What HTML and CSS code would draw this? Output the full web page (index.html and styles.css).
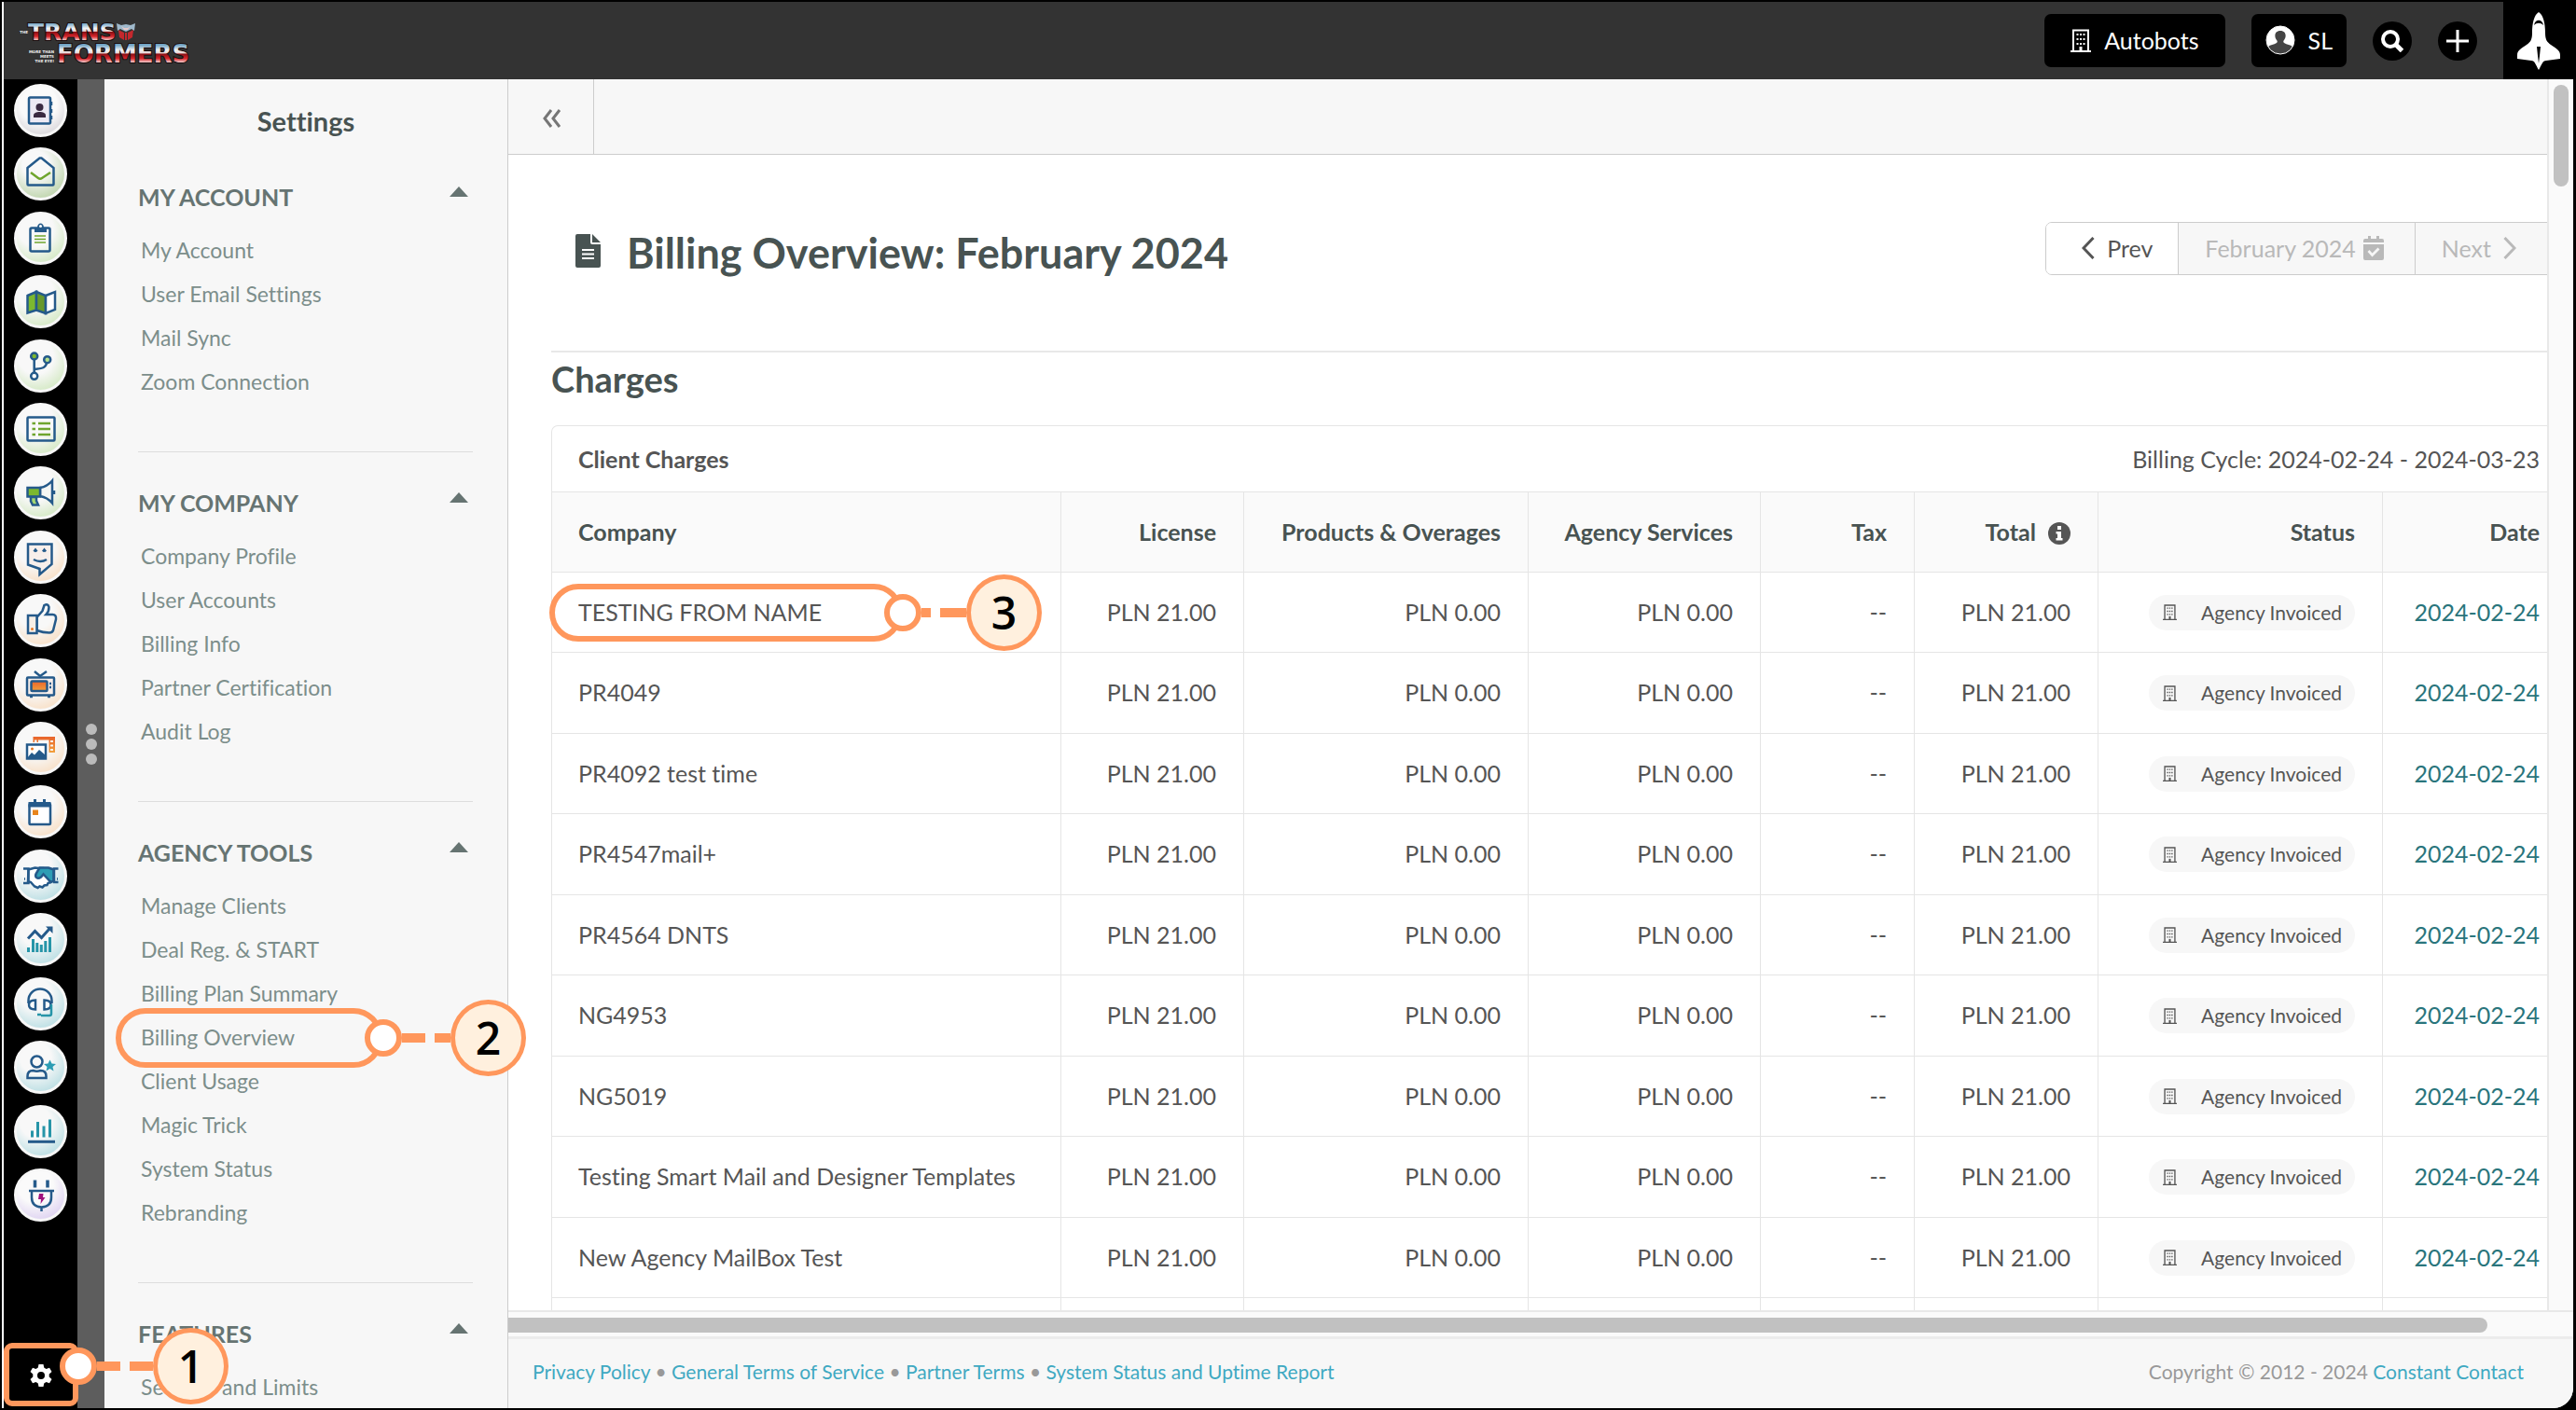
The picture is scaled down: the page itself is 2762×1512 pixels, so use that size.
FILE: index.html
```html
<!DOCTYPE html>
<html lang="en">

<head>
    <meta charset="UTF-8">
    <meta name="viewport" content="width=device-width, initial-scale=1.0">
    <title>Billing Overview</title>
    <link rel="stylesheet" href="styles.css">
</head>

<body>
    <!-- Shared shapes -->
    <svg class="defs" aria-hidden="true">
        <defs>
            <linearGradient id="chrome" x1="0" y1="0" x2="0" y2="1">
                <stop offset="0.17" stop-color="#6fa3c4" />
                <stop offset="0.36" stop-color="#f2f4f6" />
                <stop offset="0.46" stop-color="#e9d5d5" />
                <stop offset="0.5" stop-color="#8d0f14" />
                <stop offset="0.66" stop-color="#d8262c" />
                <stop offset="0.8" stop-color="#f3d3d3" />
            </linearGradient>
            <linearGradient id="flame" x1="0" y1="0" x2="0" y2="1">
                <stop offset="0" stop-color="#e8642c" />
                <stop offset="1" stop-color="#f2a03c" />
            </linearGradient>
            <symbol id="building" viewBox="0 0 22 25">
                <path fill="none" stroke="currentColor" stroke-width="2" d="M3 24V1.5h16V24M0 24h22" />
                <path fill="none" stroke="currentColor" stroke-width="2" stroke-dasharray="2 3" d="M7.5 5v14M11 5v14M14.5 5v14" />
                <path fill="currentColor" d="M9.5 19h3v5h-3z" />
            </symbol>
        </defs>
    </svg>

    <header class="topbar">
        <a class="logo" href="#" aria-label="The Transformers">
            <svg width="190" height="54" viewBox="0 0 190 54">
                <g class="logo-small">
                    <text x="8" y="19" text-anchor="end">THE</text>
                    <text x="36" y="40" text-anchor="end">MORE THAN</text>
                    <text x="36" y="45" text-anchor="end">MEETS</text>
                    <text x="36" y="50" text-anchor="end">THE EYE!</text>
                </g>
                <g class="logo-big">
                    <text class="logo-top" x="8" y="26">TRANS</text>
                    <text x="39" y="50">FORMERS</text>
                </g>
                <path fill="#9fb9cc" d="M103 8l5 2 5-1 5 1 5-2-1 8-3-2-6 3-6-3-3 2z" />
                <path fill="#c4282d" d="M105 15l6 3v8l-5-3zM121 15l-6 3v8l5-3zM112 18h2v8h-2z" />
                <path fill="#e6c9c9" d="M108 11l3 2h4l3-2-3 4h-4z" />
            </svg>
        </a>
        <nav class="topbar-actions">
            <button class="top-btn agency-btn" type="button">
                <svg width="22" height="25"><use href="#building" /></svg>Autobots
            </button>
            <button class="top-btn user-btn" type="button">
                <svg width="32" height="32" viewBox="0 0 32 32">
                    <circle cx="16" cy="16" r="15" fill="#444" stroke="#fff" stroke-width="1" />
                    <path fill="#fff" d="M16 1a15 15 0 0 0-13 22c2-2 6-2 9-4 1-1 1-2 0-3-3-4-2-10 4-10s7 6 4 10c-1 1-1 2 0 3 3 2 7 2 9 4A15 15 0 0 0 16 1z" />
                </svg>SL
            </button>
            <button class="round-btn" type="button" aria-label="Search">
                <svg width="24" height="24" viewBox="0 0 24 24" fill="none" stroke="#fff">
                    <circle cx="10" cy="10" r="8" stroke-width="4" />
                    <path d="M15.500 15.500l7 7" stroke-width="5" />
                </svg>
            </button>
            <button class="round-btn" type="button" aria-label="Add">
                <svg width="24" height="24" viewBox="0 0 24 24" stroke="#fff" stroke-width="3">
                    <path d="M12 0v24M0 12h24" />
                </svg>
            </button>
            <a class="shuttle" href="#" aria-label="Launch">
                <svg width="46" height="62" viewBox="0 0 46 62">
                    <path fill="#fff" d="M23 0c5 3 7 12 7 22 0 8 2 10 6 13 6 4 10 6 10 11v4l-15 2c-4 0-5 5-8 10-3-5-4-10-8-10L0 50v-4c0-5 4-7 10-11 4-3 6-5 6-13 0-10 2-19 7-22z" />
                    <path fill="#000" d="M18 14c1-7 9-7 10 0-3-3-7-3-10 0zM21 37h4l-1 10-1 8-1-8z" />
                </svg>
            </a>
        </nav>
    </header>

    <div class="shell">
        <nav class="rail">
            <ul class="rail-list">
                <li><a class="rail-icon gray" href="#" aria-label="Contacts"><svg viewBox="0 0 57 57"><rect x="16" y="14.500" width="23" height="28" rx="1.500" fill="#ece9f3" /><path d="M40 19v4M40 27v4M40 34v4" /><g class="plum"><circle cx="27.500" cy="25" r="4" /><path d="M21 36v-2c0-3 3-4 6.500-4s6.500 1 6.500 4v2z" /></g></svg></a></li>
                <li><a class="rail-icon green deep" href="#" aria-label="Email"><svg viewBox="0 0 57 57"><path d="M14.500 22l13-10.500h2l13 10.500v17.500q0 1-1 1h-26q-1 0-1-1z" /><path class="lime" d="M18 27l8 6q2 1.500 4 0l9-6" /></svg></a></li>
                <li><a class="rail-icon green" href="#" aria-label="Forms"><svg viewBox="0 0 57 57"><rect x="17.500" y="17.500" width="21" height="25" rx="1.500" /><path class="navy" d="M22 17h3c0-6 7-6 7 0h3v5H22z" /><circle cx="28.500" cy="15.500" r="1.500" fill="#fff" stroke="none" /><path class="lime thin" d="M22 26h12M22 29.500h12M22 33h12" /></svg></a></li>
                <li><a class="rail-icon green" href="#" aria-label="Maps"><svg viewBox="0 0 57 57"><path fill="#7cb82f" d="M14.500 22l9.500-4v19.500l-9.500 3z" /><path fill="#68992c" d="M24 18l10 4v19l-10-3.500z" /><path fill="#fff" d="M34 22l10-4v19l-10 4z" /></svg></a></li>
                <li><a class="rail-icon green" href="#" aria-label="Automations"><svg viewBox="0 0 57 57"><path d="M21.700 21v15M21.700 32c8-1 13-1 13.500-8" /><circle cx="21.700" cy="18" r="3.500" fill="#7cb82f" /><circle cx="35.700" cy="21.700" r="3.500" fill="#b5e08c" /><circle cx="21.700" cy="39.300" r="3.500" fill="#fff" /></svg></a></li>
                <li><a class="rail-icon green" href="#" aria-label="Lists"><svg viewBox="0 0 57 57"><rect x="14.500" y="15.500" width="29" height="25" rx="1" /><path class="lime" d="M26 22h13M26 28h13M26 34h13M19.500 22h3.500M19.500 28h3.500M19.500 34h3.500" stroke-width="2.500" /></svg></a></li>
                <li><a class="rail-icon green" href="#" aria-label="Campaigns"><svg viewBox="0 0 57 57"><path d="M28 23c6-1 10-4 13-7.500v24c-3-3.500-7-6.500-13-7.500z" fill="#f4f6f4" /><path fill="#7cb82f" d="M14.500 23H28v9.500H14.500z" /><path fill="#a4d873" d="M18 33h6v4l2 4.500h-6l-2-4z" /><path d="M43 26v4" /></svg></a></li>
                <li><a class="rail-icon orange" href="#" aria-label="Feedback"><svg viewBox="0 0 57 57"><path d="M15 14.500h25.500V36L27.500 47v-6L15 36.500z" fill="#f8efeb" /><path d="M21 31q7.500 4 14 0M21.500 22.500l1.500-2 1.500 2M31 22.500l1.500-2 1.500 2" /></svg></a></li>
                <li><a class="rail-icon orange" href="#" aria-label="Social"><svg viewBox="0 0 57 57"><path d="M24.500 25l6-7 2-6q4-2 5 2 0 5-3 8h7q4 0 3.500 5l-3 12q-1 2.500-4 2.500-7 0-13.500-2.500z" /><path d="M15 23h9.500v19H15z" fill="#f8efe6" /><circle cx="19.500" cy="37.500" r="1.500" fill="#e87722" stroke="none" /></svg></a></li>
                <li><a class="rail-icon orange" href="#" aria-label="Media"><svg viewBox="0 0 57 57"><path d="M22 14l6 5 7-5" /><rect x="14" y="20.500" width="29" height="19" rx="1" fill="#f8efeb" /><rect x="18.500" y="24.500" width="17" height="10.500" rx="1" fill="url(#flame)" /><path d="M38 27h2M38 31h2M17 41h3M36 41h3" /></svg></a></li>
                <li><a class="rail-icon orange" href="#" aria-label="Content"><svg viewBox="0 0 57 57"><path fill="url(#flame)" stroke="none" fill-rule="evenodd" d="M20.500 16H44v17h-6.500V19.500H26V22h-1.500v-2.500h-2.500V22h-1.500zM39 20h3v2h-3zM39 24.500h3v2h-3zM39 29h3v2h-3z" /><rect x="14" y="24.500" width="20" height="15" fill="#fff" /><path class="navy" d="M14 39l5-6 3 2.500 5-5.500 7 6v3z" /><circle cx="19.500" cy="29" r="1.500" fill="#e87722" stroke="none" /></svg></a></li>
                <li><a class="rail-icon orange" href="#" aria-label="Calendar"><svg viewBox="0 0 57 57"><rect x="16.500" y="20" width="22.500" height="22" rx="1" fill="#fff" /><path class="navy" d="M15.500 18h24v5.500h-24zM21 15h3v4h-3zM31 15h3v4h-3z" /><path fill="#e8851c" stroke="none" d="M20 26.500h6V32h-6z" /></svg></a></li>
                <li><a class="rail-icon teal" href="#" aria-label="Deals"><svg viewBox="0 0 57 57"><path fill="#fff" d="M15.500 21.500l7-2 4 .5h5l9 12-1 3-3 1-1 2-3 .5-2 2-3-1-2 1.500-3.500-1.500-4-4.500-3-1z" /><path fill="#2d9db4" d="M27.500 19.500H37l5.500 2v12l-3 1.500-8-8.500-2.500 3q-3.500 2.500-5.500 0-1-2 1-5z" /><path d="M10 20.500h5.500V36H10M47.500 20.500H43V35h4.500M11 31.500h1M46 31.500h1" /></svg></a></li>
                <li><a class="rail-icon teal" href="#" aria-label="Reports"><svg viewBox="0 0 57 57"><path class="aqua" stroke-width="3" d="M15.500 42v-5M20.500 42V28M24.800 42V32M29.300 42v-8M33.800 42V30M38.500 42V26" /><path d="M15 27.500l7.500-8 7 7L38 17" stroke-width="3" /><path class="navy" d="M34 14.500h7.500V22z" /></svg></a></li>
                <li><a class="rail-icon teal" href="#" aria-label="Support"><svg viewBox="0 0 57 57"><path d="M15.500 28v-3a12.500 12.500 0 0 1 25 0v3" /><path d="M23 24.500v10c-4 0-7-1-7-5s3-5 7-5zM32.500 24.500v10c4 0 7-1 7-5s-3-5-7-5z" fill="#fff" /><path class="aqua" d="M40 29v10q0 2-2 2h-9M25 40h4" stroke-width="2.500" /></svg></a></li>
                <li><a class="rail-icon teal" href="#" aria-label="Leads"><svg viewBox="0 0 57 57"><circle cx="24.500" cy="22.500" r="6" /><path d="M14.500 40v-2q0-6 6-6 4 1.500 8 0 6 0 6 6v2z" /><path fill="#2d9db4" stroke="none" d="M38.500 20.500l2 4 4.500.5-3.500 3 1 4.500-4-2.500-4 2.500 1-4.500-3.500-3 4.500-.5z" /></svg></a></li>
                <li><a class="rail-icon teal" href="#" aria-label="Analytics"><svg viewBox="0 0 57 57"><path class="aqua" stroke-width="3" d="M19.500 34.500v-7M25.500 34.500V18M32 34.500v-12M38.500 34.500v-19" /><path d="M15 39.300h29" stroke-width="3" /></svg></a></li>
                <li><a class="rail-icon purple" href="#" aria-label="Integrations"><svg viewBox="0 0 57 57"><path d="M22.500 12.500v8M36 12.500v8" stroke-width="3.500" /><path d="M16 24h27M19 25v6q0 10 10.500 10.500Q40 41 40 31v-6M29.500 42v4" /><path fill="#a0127d" stroke="none" d="M27 27h4.500l-.5 4h2.500l-5 7 .5-5h-3z" /></svg></a></li>
            </ul>
            <a class="rail-settings" href="#" aria-label="Settings">
                <svg width="24" height="24" viewBox="0 0 24 24">
                    <path fill="#fff" fill-rule="evenodd" d="M9.500 0h5l.7 3.600 2.300 1.300 3.500-1.200 2.500 4.300-2.800 2.400v3.200l2.800 2.400-2.500 4.300-3.500-1.200-2.300 1.300-.7 3.600h-5l-.7-3.600-2.300-1.300L3 20.300.5 16l2.800-2.400v-3.200L.5 8 3 3.700l3.500 1.200 2.300-1.300zM12 8a4 4 0 1 0 0 8 4 4 0 0 0 0-8z" />
                </svg>
                <span class="callout callout-one">
                    <span class="callout-tail"><i class="knob"></i><i class="dash"></i><i class="dash"></i><b>1</b></span>
                </span>
            </a>
        </nav>
        <div class="grip"><i></i><i></i><i></i></div>

        <aside class="sidebar">
            <h2 class="sidebar-title">Settings</h2>
            <section class="side-group">
                <h3>My Account <i class="caret"></i></h3>
                <ul>
                    <li><a href="#">My Account</a></li>
                    <li><a href="#">User Email Settings</a></li>
                    <li><a href="#">Mail Sync</a></li>
                    <li><a href="#">Zoom Connection</a></li>
                </ul>
            </section>
            <section class="side-group">
                <h3>My Company <i class="caret"></i></h3>
                <ul>
                    <li><a href="#">Company Profile</a></li>
                    <li><a href="#">User Accounts</a></li>
                    <li><a href="#">Billing Info</a></li>
                    <li><a href="#">Partner Certification</a></li>
                    <li><a href="#">Audit Log</a></li>
                </ul>
            </section>
            <section class="side-group">
                <h3>Agency Tools <i class="caret"></i></h3>
                <ul>
                    <li><a href="#">Manage Clients</a></li>
                    <li><a href="#">Deal Reg. &amp; START</a></li>
                    <li><a href="#">Billing Plan Summary</a></li>
                    <li>
                        <a href="#">Billing Overview</a>
                        <span class="callout callout-two">
                            <span class="callout-tail"><i class="knob"></i><i class="dash"></i><i class="dash"></i><b>2</b></span>
                        </span>
                    </li>
                    <li><a href="#">Client Usage</a></li>
                    <li><a href="#">Magic Trick</a></li>
                    <li><a href="#">System Status</a></li>
                    <li><a href="#">Rebranding</a></li>
                </ul>
            </section>
            <section class="side-group">
                <h3>Features <i class="caret"></i></h3>
                <ul>
                    <li><a href="#">Settings and Limits</a></li>
                </ul>
            </section>
        </aside>

        <main class="main">
            <div class="viewport">
                <div class="content">
                    <div class="toolbar">
                        <button class="collapse-btn" type="button" aria-label="Collapse menu">
                            <svg width="22" height="20" viewBox="0 0 22 20" fill="none" stroke="#767676" stroke-width="3">
                                <path d="M10 1L3 10l7 9M19 1l-7 9 7 9" />
                            </svg>
                        </button>
                    </div>
                    <div class="page">
                        <div class="page-head">
                            <svg width="27" height="36" viewBox="0 0 27 36">
                                <path fill="#485352" fill-rule="evenodd" d="M2 0h14v9q0 2 2 2h9v23q0 2-2 2H2q-2 0-2-2V2q0-2 2-2zM18 0l9 9h-9zM7 16h13v2H7zM7 20.500h13v2H7zM7 25h13v2H7z" />
                            </svg>
                            <h1>Billing Overview: February 2024</h1>
                            <div class="month-nav">
                                <button type="button">
                                    <svg width="14" height="24" viewBox="0 0 14 24" fill="none" stroke="currentColor" stroke-width="3"><path d="M12.500 1L2 12l10.500 11" /></svg>Prev
                                </button>
                                <button type="button" disabled>February 2024
                                    <svg width="22" height="26" viewBox="0 0 22 26">
                                        <path fill="currentColor" fill-rule="evenodd" d="M5 0h3v3h6V0h3v3h3q2 0 2 2v2H0V5q0-2 2-2h3zM0 9h22v15q0 2-2 2H2q-2 0-2-2zM4.500 17l5 5.500 8-8-2-2-6 6-3-3.500z" />
                                    </svg>
                                </button>
                                <button type="button" disabled>Next
                                    <svg width="14" height="24" viewBox="0 0 14 24" fill="none" stroke="currentColor" stroke-width="3"><path d="M1.500 1L12 12 1.500 23" /></svg>
                                </button>
                            </div>
                        </div>
                        <h2 class="section-title">Charges</h2>
                        <div class="panel-head">
                            <strong>Client Charges</strong>
                            <span>Billing Cycle: 2024-02-24 - 2024-03-23</span>
                        </div>
                        <table class="charges">
                            <colgroup>
                                <col>
                                <col class="col-license">
                                <col class="col-products">
                                <col class="col-services">
                                <col class="col-tax">
                                <col class="col-total">
                                <col class="col-status">
                                <col class="col-date">
                            </colgroup>
                            <thead>
                                <tr>
                                    <th>Company</th>
                                    <th>License</th>
                                    <th>Products &amp; Overages</th>
                                    <th>Agency Services</th>
                                    <th>Tax</th>
                                    <th>Total
                                        <svg class="info" width="24" height="24" viewBox="0 0 24 24">
                                            <circle cx="12" cy="12" r="12" fill="#555" />
                                            <path fill="#fff" d="M10 4h4v4h-4zM8.500 10H14v7h1.500v2.500h-7V17H10v-4.500H8.500z" />
                                        </svg>
                                    </th>
                                    <th>Status</th>
                                    <th>Date</th>
                                </tr>
                            </thead>
                            <tbody>
                                <tr>
                                    <td>TESTING FROM NAME
                                        <span class="callout callout-three">
                                            <span class="callout-tail"><i class="knob"></i><i class="dash"></i><i class="dash"></i><b>3</b></span>
                                        </span>
                                    </td>
                                    <td>PLN 21.00</td><td>PLN 0.00</td><td>PLN 0.00</td><td>--</td><td>PLN 21.00</td>
                                    <td><span class="chip"><svg width="15" height="17"><use href="#building" /></svg>Agency Invoiced</span></td>
                                    <td><a href="#">2024-02-24</a></td>
                                </tr>
                                <tr>
                                    <td>PR4049</td>
                                    <td>PLN 21.00</td><td>PLN 0.00</td><td>PLN 0.00</td><td>--</td><td>PLN 21.00</td>
                                    <td><span class="chip"><svg width="15" height="17"><use href="#building" /></svg>Agency Invoiced</span></td>
                                    <td><a href="#">2024-02-24</a></td>
                                </tr>
                                <tr>
                                    <td>PR4092 test time</td>
                                    <td>PLN 21.00</td><td>PLN 0.00</td><td>PLN 0.00</td><td>--</td><td>PLN 21.00</td>
                                    <td><span class="chip"><svg width="15" height="17"><use href="#building" /></svg>Agency Invoiced</span></td>
                                    <td><a href="#">2024-02-24</a></td>
                                </tr>
                                <tr>
                                    <td>PR4547mail+</td>
                                    <td>PLN 21.00</td><td>PLN 0.00</td><td>PLN 0.00</td><td>--</td><td>PLN 21.00</td>
                                    <td><span class="chip"><svg width="15" height="17"><use href="#building" /></svg>Agency Invoiced</span></td>
                                    <td><a href="#">2024-02-24</a></td>
                                </tr>
                                <tr>
                                    <td>PR4564 DNTS</td>
                                    <td>PLN 21.00</td><td>PLN 0.00</td><td>PLN 0.00</td><td>--</td><td>PLN 21.00</td>
                                    <td><span class="chip"><svg width="15" height="17"><use href="#building" /></svg>Agency Invoiced</span></td>
                                    <td><a href="#">2024-02-24</a></td>
                                </tr>
                                <tr>
                                    <td>NG4953</td>
                                    <td>PLN 21.00</td><td>PLN 0.00</td><td>PLN 0.00</td><td>--</td><td>PLN 21.00</td>
                                    <td><span class="chip"><svg width="15" height="17"><use href="#building" /></svg>Agency Invoiced</span></td>
                                    <td><a href="#">2024-02-24</a></td>
                                </tr>
                                <tr>
                                    <td>NG5019</td>
                                    <td>PLN 21.00</td><td>PLN 0.00</td><td>PLN 0.00</td><td>--</td><td>PLN 21.00</td>
                                    <td><span class="chip"><svg width="15" height="17"><use href="#building" /></svg>Agency Invoiced</span></td>
                                    <td><a href="#">2024-02-24</a></td>
                                </tr>
                                <tr>
                                    <td>Testing Smart Mail and Designer Templates</td>
                                    <td>PLN 21.00</td><td>PLN 0.00</td><td>PLN 0.00</td><td>--</td><td>PLN 21.00</td>
                                    <td><span class="chip"><svg width="15" height="17"><use href="#building" /></svg>Agency Invoiced</span></td>
                                    <td><a href="#">2024-02-24</a></td>
                                </tr>
                                <tr>
                                    <td>New Agency MailBox Test</td>
                                    <td>PLN 21.00</td><td>PLN 0.00</td><td>PLN 0.00</td><td>--</td><td>PLN 21.00</td>
                                    <td><span class="chip"><svg width="15" height="17"><use href="#building" /></svg>Agency Invoiced</span></td>
                                    <td><a href="#">2024-02-24</a></td>
                                </tr>
                                <tr>
                                    <td></td><td></td><td></td><td></td><td></td><td></td><td></td><td></td>
                                </tr>
                            </tbody>
                        </table>
                    </div>
                </div>
                <div class="track-y"><i></i></div>
            </div>
            <div class="track-x"><i></i></div>
            <footer class="footer">
                <div>
                    <a href="#">Privacy Policy</a> •
                    <a href="#">General Terms of Service</a> •
                    <a href="#">Partner Terms</a> •
                    <a href="#">System Status and Uptime Report</a>
                </div>
                <div>Copyright © 2012 - 2024 <a href="#">Constant Contact</a></div>
            </footer>
        </main>
    </div>
</body>

</html>
```
FILE: styles.css
```css
* {
    box-sizing: border-box;
}

html {
    background: #000;
}

body {
    display: flex;
    flex-direction: column;
    height: 100vh;
    margin: 0;
    border: 2px solid #000;
    border-right-width: 3px;
    border-bottom-right-radius: 24px;
    overflow: hidden;
    background: #fff;
    color: #555;
    font-family: Lato, "Open Sans", sans-serif;
    font-size: 25px;
    font-variant-ligatures: none;
    line-height: 36px;
}

h1, h2, h3, ul {
    margin: 0;
    padding: 0;
}

ul {
    list-style: none;
}

a {
    color: inherit;
    text-decoration: none;
}

button {
    border: 0;
    margin: 0;
    font: inherit;
    font-variant-ligatures: none;
    color: inherit;
    cursor: pointer;
}

.defs {
    position: absolute;
    width: 0;
    height: 0;
}

/* Top bar */
.topbar {
    display: flex;
    justify-content: space-between;
    align-items: center;
    flex: none;
    height: 83px;
    margin-left: 2px;
    background: #333;
}

.logo {
    display: flex;
    padding-left: 18px;
}

.logo svg {
    overflow: visible;
}

.logo-big {
    font: bold 26px "DejaVu Sans", sans-serif;
    fill: url(#chrome);
    stroke: #1a0d0e;
    stroke-width: 2px;
    paint-order: stroke;
}

.logo-top {
    font-size: 25px;
}

.logo-small {
    font: bold 4px "DejaVu Sans", sans-serif;
    fill: #eee;
}

.topbar-actions {
    display: flex;
    align-items: center;
    gap: 28px;
    height: 100%;
    color: #fff;
}

.top-btn {
    display: flex;
    align-items: center;
    gap: 14px;
    height: 57px;
    border-radius: 7px;
    background: #000;
}

.agency-btn {
    padding: 0 28px 1px;
}

.user-btn {
    padding: 0 15px 1px;
}

.round-btn {
    display: flex;
    align-items: center;
    justify-content: center;
    width: 42px;
    height: 42px;
    padding: 0;
    border-radius: 50%;
    background: #000;
}

.shuttle {
    display: flex;
    align-items: center;
    justify-content: center;
    width: 75px;
    height: 100%;
    background: #000;
}

.shell {
    display: flex;
    flex: 1;
    min-height: 0;
    margin-left: 2px;
}

/* Icon rail */
.rail {
    display: flex;
    flex-direction: column;
    width: 79px;
    background: #000;
}

.rail-list {
    display: flex;
    flex: 1;
    flex-direction: column;
    justify-content: space-between;
    padding: 5px 0 130px 11px;
}

.rail-icon {
    display: block;
    width: 57px;
    height: 57px;
    border: 3px solid #f7f7f7;
    border-radius: 50%;
}

.rail-icon svg {
    display: block;
    width: 57px;
    height: 57px;
    margin: -3px;
    fill: none;
    stroke: #255a8a;
    stroke-width: 2.5;
}

.rail-icon .navy {
    fill: #255a8a;
    stroke: none;
}

.rail-icon .plum {
    fill: #3a2a41;
    stroke: none;
}

.rail-icon .lime {
    stroke: #6fa52e;
}

.rail-icon .thin {
    stroke-width: 1.5;
}

.rail-icon .aqua {
    stroke: #2795a8;
}

.gray {
    background: radial-gradient(circle at 45% 35%, #fafafa 45%, #c9c5cc);
}

.green {
    background: radial-gradient(circle at 40% 30%, #f8f8f8 40%, #cde6ba 90%);
}

.deep {
    background: radial-gradient(circle at 40% 30%, #f8f8f8 30%, #b5cfa0 90%);
}

.orange {
    background: radial-gradient(circle at 40% 30%, #f8f8f8 40%, #f8dbbd 90%);
}

.teal {
    background: radial-gradient(circle at 40% 30%, #f8f8f8 35%, #b0dae0 90%);
}

.purple {
    background: radial-gradient(circle at 40% 30%, #fafafa 40%, #d9caf0 90%);
}

.rail-settings {
    position: relative;
    display: flex;
    align-items: center;
    justify-content: center;
    height: 70px;
}

.grip {
    display: flex;
    flex-direction: column;
    align-items: center;
    justify-content: center;
    gap: 4px;
    width: 29px;
    background: #5d5d5d;
}

.grip i {
    width: 12px;
    height: 12px;
    border-radius: 50%;
    background: #bbb;
}

/* Settings menu */
.sidebar {
    width: 432px;
    background: #f7f7f7;
}

.sidebar-title {
    padding-bottom: 19px;
    color: #485352;
    font-size: 29px;
    line-height: 90px;
    text-align: center;
}

.side-group {
    margin: 0 37px 37px 36px;
    padding-bottom: 51px;
    border-bottom: 1px solid #ddd;
}

.side-group h3 {
    display: flex;
    justify-content: space-between;
    margin-bottom: 17px;
    padding-right: 5px;
    color: #667472;
    font-size: 25px;
    line-height: 34px;
    text-transform: uppercase;
}

.caret {
    align-self: flex-start;
    height: 0;
    margin-top: 6px;
    border: 10px solid transparent;
    border-top-width: 0;
    border-bottom: 11px solid #667472;
}

.side-group li {
    position: relative;
    padding-left: 3px;
    color: #7c8e8b;
    font-size: 23px;
    line-height: 47px;
}

/* Main area */
.main {
    display: flex;
    flex: 1;
    flex-direction: column;
    min-width: 0;
    border-left: 1px solid #ccc;
}

.viewport {
    display: flex;
    flex: 1;
    min-height: 0;
}

.content {
    flex: 1;
    min-width: 0;
    overflow: hidden;
    background: #fff;
}

.toolbar {
    height: 81px;
    border-bottom: 1px solid #ccc;
    background: #f7f7f7;
}

.collapse-btn {
    display: flex;
    align-items: center;
    justify-content: center;
    width: 92px;
    height: 80px;
    padding: 3px 0 0 2px;
    border-right: 1px solid #ccc;
    background: none;
}

.page {
    margin-right: -20px;
    padding: 72px 0 0 46px;
}

.page-head {
    display: flex;
    align-items: flex-start;
    padding: 0 0 72px 26px;
    border-bottom: 2px solid #e8e8e8;
}

.page-head > svg {
    margin: 13px 28px 0 0;
}

.page-head h1 {
    flex: 1;
    color: #485352;
    font-size: 45px;
    line-height: 66px;
}

.month-nav {
    display: flex;
    height: 57px;
    border: 1px solid #ccc;
    border-radius: 7px;
    overflow: hidden;
}

.month-nav button {
    display: flex;
    align-items: center;
    gap: 13px;
    padding: 0 27px 1px 38px;
    background: #fff;
}

.month-nav button:disabled {
    gap: 8px;
    padding: 0 33px 1px 28px;
    border-left: 1px solid #ccc;
    background: #f7f7f7;
    color: #b9b9b9;
}

.month-nav button:last-child {
    gap: 13px;
    padding-right: 52px;
}

.section-title {
    margin-bottom: 22px;
    color: #485352;
    font-size: 38px;
    line-height: 56px;
}

.panel-head {
    display: flex;
    align-items: center;
    justify-content: space-between;
    height: 71px;
    padding: 0 27px 0 28px;
    border: 1px solid #e5e5e5;
    border-bottom: 0;
    border-radius: 7px 7px 0 0;
}

.charges {
    width: 100%;
    border-spacing: 0;
    table-layout: fixed;
}

.col-license { width: 196px; }
.col-products { width: 305px; }
.col-services { width: 249px; }
.col-tax { width: 165px; }
.col-total { width: 197px; }
.col-status { width: 305px; }
.col-date { width: 197px; }

.charges th,
.charges td {
    height: 86px;
    padding: 0 29px 2px 28px;
    border-top: 1px solid #e5e5e5;
    border-left: 1px solid #e5e5e5;
    text-align: right;
}

.charges th:last-child,
.charges td:last-child {
    padding-right: 28px;
}

.charges tbody tr:nth-child(even) td {
    height: 87px;
}

.charges th {
    background: #fafafa;
    color: #485352;
}

.charges th:first-child,
.charges td:first-child {
    position: relative;
    text-align: left;
}

.charges td a {
    color: #29757c;
}

.info {
    margin-left: 7px;
    vertical-align: -4px;
}

.chip {
    display: inline-flex;
    align-items: center;
    gap: 26px;
    height: 38px;
    padding: 0 14px 0 15px;
    border-radius: 19px;
    background: #f7f7f7;
    font-size: 21px;
    vertical-align: middle;
}

/* Scroll bars */
.track-y {
    width: 28px;
    padding-top: 6px;
    border-left: 2px solid #e8e8e8;
    background: #fafafa;
}

.track-y i {
    display: block;
    width: 16px;
    height: 109px;
    margin-left: 5px;
    border-radius: 8px;
    background: #c1c1c1;
}

.track-x {
    height: 31px;
    padding: 6px 92px 0 0;
    border-top: 2px solid #e8e8e8;
    border-bottom: 3px solid #ececec;
    background: #fafafa;
}

.track-x i {
    display: block;
    height: 16px;
    border-radius: 0 8px 8px 0;
    background: #c1c1c1;
}

.footer {
    display: flex;
    align-items: center;
    justify-content: space-between;
    height: 74px;
    padding: 0 53px 4px 26px;
    background: #f7f7f7;
    color: #999;
    font-size: 21px;
}

.footer a {
    color: #3fa9c2;
}

/* Numbered callouts */
.callout {
    position: absolute;
    z-index: 5;
    border: 6px solid #ff975c;
    border-radius: 32px;
}

.callout-tail {
    position: absolute;
    top: 50%;
    left: 100%;
    display: flex;
    align-items: center;
    margin: -41px 0 0 -14px;
}

.knob {
    width: 40px;
    height: 40px;
    border: 6px solid #ff975c;
    border-radius: 50%;
    background: #fff;
}

.dash {
    width: 25px;
    height: 10px;
    background: #ff975c;
}

.dash + .dash {
    margin-left: 10px;
}

.callout-tail b {
    width: 81px;
    height: 82px;
    border: 5px solid #ff975c;
    border-radius: 50%;
    background: #fff0de;
    color: #000;
    font: 600 48px/72px "Open Sans", sans-serif;
    text-align: center;
}

.callout-one {
    top: 0;
    right: -1px;
    bottom: 2px;
    left: 0;
    border-radius: 9px;
}

.callout-one .callout-tail {
    margin-top: -50px;
}

.callout-two {
    top: -8px;
    left: -24px;
    width: 287px;
    height: 64px;
}

.callout-two .dash + .dash {
    width: 17px;
}

.callout-three {
    top: 12px;
    left: -3px;
    width: 379px;
    height: 62px;
}

.callout-three .dash {
    width: 10px;
}

.callout-three .dash + .dash {
    width: 28px;
}
```
